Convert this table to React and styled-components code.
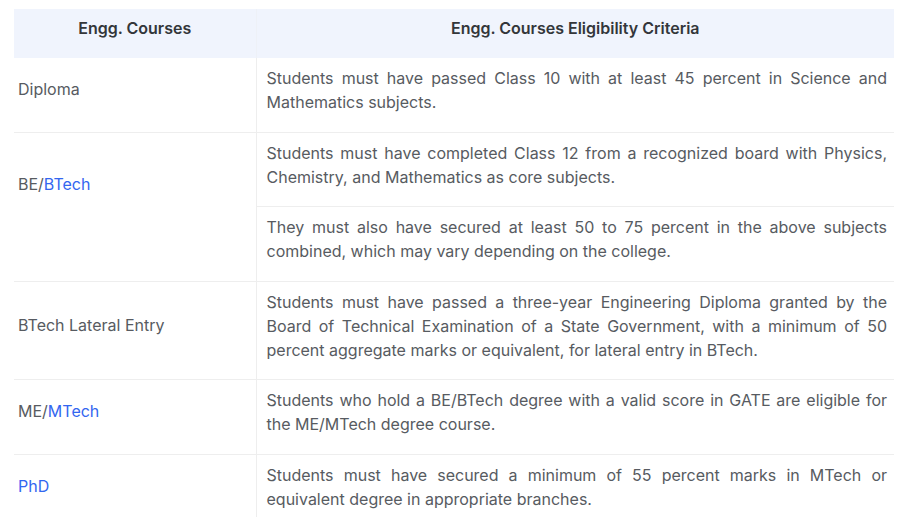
import React from "react";
import styled, { createGlobalStyle } from "styled-components";

const Global = createGlobalStyle`
  html, body { margin: 0; padding: 0; background: #ffffff; }
  body { font-family: Inter, "Noto Sans", Arial, sans-serif; -webkit-font-smoothing: antialiased; }
`;

const Page = styled.div`
  padding: 9px 8px 0 14px;
`;

const Table = styled.table`
  width: 880px;
  border-collapse: collapse;
  table-layout: fixed;
  font-size: 16px;
  line-height: 24px;
  color: #575b61;
`;

const HeadCell = styled.th`
  background: #f0f4fd;
  color: #33363a;
  font-weight: 600;
  text-align: center;
  padding: 7px 8px 18px;
  height: 24px;
  vertical-align: top;
  border-left: ${(p) => (p.$divider ? "1px solid #eef1f7" : "none")};
`;

const Row = styled.tr`
  border-bottom: 1px solid #eeeeee;
`;

const CourseCell = styled.td`
  vertical-align: middle;
  padding: 8px 8px ${(p) => (p.$span ? 54 : 19)}px 4px;
  border-right: 1px solid #eeeeee;
`;

const CriteriaCell = styled.td`
  text-align: justify;
  vertical-align: top;
  padding: 8px 7px 17.5px 10px;
`;

const Blue = styled.span`
  color: #3366f0;
`;

const rows = [
  {
    course: <>Diploma</>,
    criteria: [
      "Students must have passed Class 10 with at least 45 percent in Science and Mathematics subjects.",
    ],
  },
  {
    course: (
      <>
        BE/<Blue>BTech</Blue>
      </>
    ),
    criteria: [
      "Students must have completed Class 12 from a recognized board with Physics, Chemistry, and Mathematics as core subjects.",
      "They must also have secured at least 50 to 75 percent in the above subjects combined, which may vary depending on the college.",
    ],
  },
  {
    course: <>BTech Lateral Entry</>,
    criteria: [
      "Students must have passed a three-year Engineering Diploma granted by the Board of Technical Examination of a State Government, with a minimum of 50 percent aggregate marks or equivalent, for lateral entry in BTech.",
    ],
  },
  {
    course: (
      <>
        ME/<Blue>MTech</Blue>
      </>
    ),
    criteria: [
      "Students who hold a BE/BTech degree with a valid score in GATE are eligible for the ME/MTech degree course.",
    ],
  },
  {
    course: <Blue>PhD</Blue>,
    criteria: [
      "Students must have secured a minimum of 55 percent marks in MTech or equivalent degree in appropriate branches.",
    ],
  },
];

export default function App() {
  return (
    <>
      <Global />
      <Page>
        <Table>
          <colgroup>
            <col style={{ width: 242 }} />
            <col style={{ width: 638 }} />
          </colgroup>
          <thead>
            <tr>
              <HeadCell>Engg. Courses</HeadCell>
              <HeadCell $divider>Engg. Courses Eligibility Criteria</HeadCell>
            </tr>
          </thead>
          <tbody>
            {rows.map((r, i) =>
              r.criteria.map((c, j) => (
                <Row key={`${i}-${j}`}>
                  {j === 0 && (
                    <CourseCell
                      rowSpan={r.criteria.length}
                      $span={r.criteria.length > 1}
                    >
                      {r.course}
                    </CourseCell>
                  )}
                  <CriteriaCell>{c}</CriteriaCell>
                </Row>
              ))
            )}
          </tbody>
        </Table>
      </Page>
    </>
  );
}
